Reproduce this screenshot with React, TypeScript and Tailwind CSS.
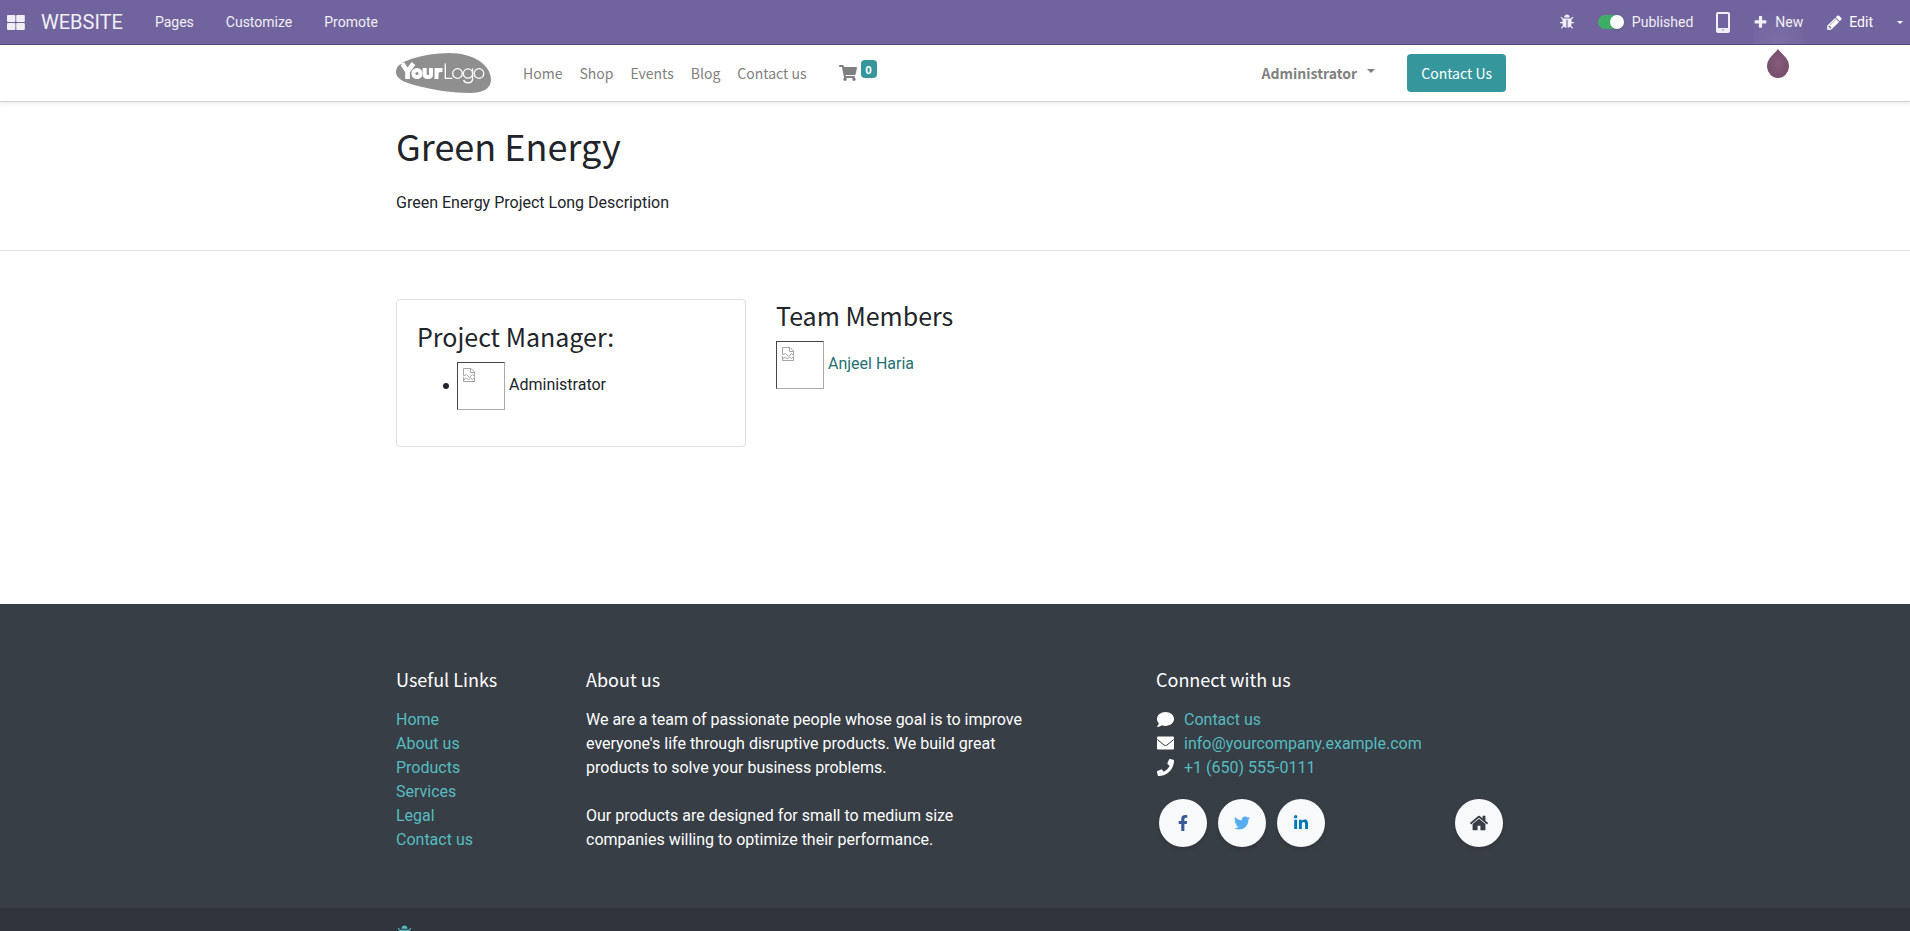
import React from "react";
import { FaShoppingCart, FaComment, FaPhone, FaFacebookF, FaTwitter, FaLinkedinIn } from "react-icons/fa";

const HEAD = "font-['Noto_Sans_CJK_SC','Open_Sans',sans-serif]";

const BUG =
  "M1696 960q0 26-19 45t-45 19h-224q0 171-67 290l208 209q19 19 19 45t-19 45q-18 19-45 19t-45-19l-198-197q-5 5-15 13t-42 28.5-65 36.5-82 29-97 13v-896h-128v896q-51 0-101.500-13.500t-87-33-66-39-43.500-32.500l-15-14-183 207q-20 21-48 21-24 0-43-16-19-18-20.500-44.500t15.500-46.500l202-227q-58-114-58-274h-224q-26 0-45-19t-19-45 19-45 45-19h224v-294l-173-173q-19-19-19-45t19-45 45-19 45 19l173 173h844l173-173q19-19 45-19t45 19 19 45-19 45l-173 173v294h224q26 0 45 19t19 45zm-480-576h-640q0-133 93.500-226.500t226.500-93.500 226.500 93.500 93.500 226.500z";
const PENCIL =
  "M491 1536l91-91-235-235-91 91v107h128v128h107zm523-928q0-22-22-22-10 0-17 7l-542 542q-7 7-7 17 0 22 22 22 10 0 17-7l542-542q7-7 7-17zm-54-192l416 416-832 832h-416v-416zm683 96q0 53-37 90l-166 166-416-416 166-165q36-38 90-38 53 0 91 38l235 234q37 39 37 91z";
const PLUS =
  "M1600 736v192q0 40-28 68t-68 28h-416v416q0 40-28 68t-68 28h-192q-40 0-68-28t-28-68v-416h-416q-40 0-68-28t-28-68v-192q0-40 28-68t68-28h416v-416q0-40 28-68t68-28h192q40 0 68 28t28 68v416h416q40 0 68 28t28 68z";
const HOME =
  "M1472 992v480q0 26-19 45t-45 19h-384v-384h-256v384h-384q-26 0-45-19t-19-45v-480q0-1 .5-3t.5-3l575-474 575 474q1 2 1 6zm223-69l-62 74q-8 9-21 11h-3q-13 0-21-7l-692-577-692 577q-12 8-24 7-13-2-21-11l-62-74q-8-10-7-23.500t11-21.500l719-599q32-26 76-26t76 26l244 204v-195q0-14 9-23t23-9h192q14 0 23 9t9 23v408l219 182q10 8 11 21.500t-7 23.500z";

function Glyph({ d, className }: { d: string; className: string }) {
  return (
    <svg viewBox="0 0 1792 1792" className={className} fill="currentColor" aria-hidden="true">
      <path d={d} />
    </svg>
  );
}

function AppsIcon() {
  return (
    <svg viewBox="0 0 18 15" className="h-[15px] w-[18px]" fill="currentColor" aria-hidden="true">
      <rect x="0" y="0" width="8.4" height="7" rx="1" />
      <rect x="9.2" y="0" width="8.6" height="7" rx="1" />
      <rect x="0" y="8" width="8.4" height="7" rx="1" />
      <rect x="9.2" y="8" width="8.6" height="7" rx="1" />
    </svg>
  );
}

function MobileIcon() {
  return (
    <svg viewBox="0 0 14 21" className="h-[21px] w-[14px]" aria-hidden="true">
      <path fillRule="evenodd" fill="currentColor" d="M2 0h10a2 2 0 0 1 2 2v17a2 2 0 0 1-2 2H2a2 2 0 0 1-2-2V2a2 2 0 0 1 2-2zM2 2v14h10V2zM6 17.500h2l-1 1.500z" />
    </svg>
  );
}

function EnvelopeIcon() {
  return (
    <svg viewBox="0 0 17 14" className="mb-[2px] ml-px h-[14px] w-[17px]" aria-hidden="true">
      <rect width="17" height="13" y=".5" rx="1" fill="currentColor" />
      <path d="M.3 3.500L7 9Q8.500 10.200 10 9L16.700 3.500" fill="none" stroke="#383e45" strokeWidth="1" />
    </svg>
  );
}

function Logo() {
  return (
    <svg viewBox="0 0 95 40" className="h-10 w-[95px]" role="img" aria-label="Your Logo">
      <path d="M0 19C0 12 7 9 15 6C27 2 40 0 53 0C76 0 95 11 95 27C95 36 86 40 74 40C58 40 36 37 18 32C7 29 0 25 0 19Z" fill="#8f8f8f" />
      <g fill="none" stroke="#fff" strokeLinecap="butt">
        <path d="M4 10.500H9" strokeWidth="1.500" />
        <path d="M6.500 11L11.500 18.500L17.500 10.500M11.500 17V26" strokeWidth="4.600" />
        <circle cx="21" cy="20.500" r="3.600" strokeWidth="4" />
        <path d="M28.700 15V21.500Q28.700 24 31.800 24Q35 24 35 21.500V15" strokeWidth="4" />
        <path d="M40.500 26V15M40.500 20Q41 16.700 46.500 17" strokeWidth="4" />
        <path d="M49.300 10.500V25.300H56.500" strokeWidth="1.300" />
        <circle cx="61.500" cy="20.500" r="4.800" strokeWidth="1.300" />
        <circle cx="72" cy="20.500" r="4.600" strokeWidth="1.300" />
        <path d="M76.600 15.500V25.500Q76.600 29.800 72 29.800Q68.500 29.800 67.600 27" strokeWidth="1.300" />
        <circle cx="83" cy="20.500" r="4.800" strokeWidth="1.300" />
      </g>
    </svg>
  );
}

function BrokenImage() {
  return (
    <span className="inline-block h-12 w-12 shrink-0 border border-t-[#464646] border-l-[#464646] border-r-[#ababab] border-b-[#ababab] p-[5px]">
      <svg viewBox="0 0 12 14" className="h-[14px] w-3" fill="none" stroke="#a5a5a5" aria-hidden="true">
        <path d="M.5 7.500V.5H8L11.500 4V8.500L9.500 6.500L6.500 9.500L3.500 6.500L.5 8M7.500 .5V4.500H11.500" />
        <path d="M.5 9.500V13.500H11.500V9.500L9.500 11.500L7.500 10L5.500 12L3.500 10L1.500 11.500Z" />
      </svg>
    </span>
  );
}

const menu = ["Home", "Shop", "Events", "Blog", "Contact us"];
const links = ["Home", "About us", "Products", "Services", "Legal", "Contact us"];
const round = "flex size-12 items-center justify-center rounded-full bg-[#f8f9fa] shadow-[0_2px_4px_rgba(0,0,0,0.15)]";

export default function App() {
  return (
    <div className="flex h-screen flex-col overflow-hidden bg-white font-[Roboto,sans-serif] text-base leading-6 text-[#212529]">
      <header className="flex h-[45px] shrink-0 items-center border-b border-[#5a4c80] bg-[#71639e] text-sm text-white/90">
        <a href="#apps" aria-label="Applications" className="pl-[7px]"><AppsIcon /></a>
        <a href="#website" className="ml-4 text-xl">WEBSITE</a>
        <nav className="ml-8 flex gap-8">
          <a href="#pages">Pages</a>
          <a href="#customize">Customize</a>
          <a href="#promote">Promote</a>
        </nav>
        <div className="ml-auto flex h-full items-center">
          <a href="#debug" aria-label="Debug" className="mr-[23px]"><Glyph d={BUG} className="size-4" /></a>
          <label className="mr-[23px] flex items-center gap-2">
            <span className="relative flex h-[14px] w-[26px] items-center rounded-full bg-[#40ad67]">
              <input type="checkbox" defaultChecked className="absolute inset-0 appearance-none" />
              <span className="ml-auto size-[14px] rounded-full bg-white shadow" />
            </span>
            Published
          </label>
          <button type="button" aria-label="Mobile preview" className="mr-[23px]"><MobileIcon /></button>
          <div className="relative flex h-full items-center bg-[radial-gradient(circle_at_50%_100%,rgba(255,255,255,0.08),transparent_70%)]">
            <button type="button" className="flex items-center gap-[7px]"><Glyph d={PLUS} className="size-[15px]" />New</button>
            <svg viewBox="0 0 22 30" className="absolute top-[49px] left-[14px] h-[30px] w-[22px]" aria-hidden="true">
              <defs>
                <radialGradient id="drop"><stop offset="0" stopColor="#875a7b" /><stop offset="1" stopColor="#774f6c" /></radialGradient>
              </defs>
              <path d="M11 0C13 3 17 6 19.500 9.500A11 12 0 1 1 2.500 9.500C5 6 9 3 11 0Z" fill="url(#drop)" />
            </svg>
          </div>
          <button type="button" className="ml-[23px] flex items-center gap-[6px] text-white"><Glyph d={PENCIL} className="size-[17px]" />Edit</button>
          <button type="button" aria-label="More" className="mr-[7px] ml-6 border-x-[3px] border-t-[3px] border-x-transparent border-t-white" />
        </div>
      </header>

      <div className="shrink-0 border-b border-[#d3d3d3] pr-2 shadow-[0_2px_4px_rgba(0,0,0,0.075)]">
        <div className={`mx-auto flex h-14 max-w-[1140px] items-center px-[15px] text-[14px] text-[#808080] ${HEAD}`}>
          <a href="#home"><Logo /></a>
          <nav className="ml-8 flex items-center gap-[17px]">
            {menu.map((m) => <a key={m} href="#menu">{m}</a>)}
          </nav>
          <a href="#cart" aria-label="Cart" className="ml-8 flex items-center gap-1">
            <FaShoppingCart className="size-[18px]" />
            <span className="mb-2 flex h-[18px] w-4 items-center justify-center rounded bg-[#35979c] text-[11px] font-bold text-white">0</span>
          </a>
          <button type="button" className="ml-auto flex items-center gap-[10px] font-bold">Administrator
            <span className="mb-1 border-x-4 border-t-4 border-x-transparent border-t-current" />
          </button>
          <a href="#contact" className="ml-8 rounded bg-[#35979c] px-[14px] py-[7px] text-white">Contact Us</a>
        </div>
      </div>

      <section className="shrink-0 border-b border-[#dee2e6] pr-2">
        <div className="mx-auto max-w-[1140px] px-[15px] pt-5 pb-[35px]">
          <h1 className={`text-[36px] leading-[46px] ${HEAD}`}>Green Energy</h1>
          <p className="mt-[23px]">Green Energy Project Long Description</p>
        </div>
      </section>

      <main className="grow pr-2">
        <div className="mx-auto flex max-w-[1140px] items-start pt-12">
          <div className="w-1/3 px-[15px]">
            <div className="rounded border border-[#dfdfdf] px-5 pt-5 pb-9">
              <h2 className={`text-[25px] leading-8 ${HEAD}`}>Project Manager:</h2>
              <ul className="mt-[10px] pl-[26px]">
                <li className="flex items-center">
                  <span className="mr-2 size-[6px] rounded-full bg-current" />
                  <BrokenImage />
                  <span className="mb-[2px] ml-1">Administrator</span>
                </li>
              </ul>
            </div>
          </div>
          <div className="w-2/3 px-[15px]">
            <h2 className={`text-[25px] leading-8 ${HEAD}`}>Team Members</h2>
            <a href="#member" className="mt-[10px] flex items-center text-[#23716f]">
              <BrokenImage />
              <span className="mb-[2px] ml-1">Anjeel Haria</span>
            </a>
          </div>
        </div>
      </main>

      <footer className="shrink-0 bg-[#383e45] text-white">
        <div className="pr-2">
          <div className="mx-auto flex h-[304px] max-w-[1140px] pt-16">
            <div className="w-1/6 px-[15px]">
              <h5 className={`mb-[18px] text-[18px] leading-[22px] ${HEAD}`}>Useful Links</h5>
              <ul className="text-[#55bcc1]">
                {links.map((l) => <li key={l}><a href="#link">{l}</a></li>)}
              </ul>
            </div>
            <div className="w-5/12 px-[15px]">
              <h5 className={`mb-[18px] text-[18px] leading-[22px] ${HEAD}`}>About us</h5>
              <p>We are a team of passionate people whose goal is to improve everyone's life through disruptive products. We build great products to solve your business problems.</p>
              <p className="mt-6 pr-10">Our products are designed for small to medium size companies willing to optimize their performance.</p>
            </div>
            <div className="ml-auto w-1/3 px-[15px]">
              <h5 className={`mb-[18px] text-[18px] leading-[22px] ${HEAD}`}>Connect with us</h5>
              <ul>
                <li className="flex items-center gap-[10px]"><FaComment className="mb-[2px] ml-px size-[17px]" /><a className="text-[#55bcc1]" href="#contact">Contact us</a></li>
                <li className="flex items-center gap-[10px]"><EnvelopeIcon /><a className="text-[#55bcc1]" href="#mail">info@yourcompany.example.com</a></li>
                <li className="flex items-center gap-[10px]"><FaPhone className="mb-[2px] ml-px size-[17px]" /><a className="text-[#55bcc1]" href="#phone">+1 (650) 555-0111</a></li>
              </ul>
              <div className="mt-[19px] flex gap-[11px] px-[3px]">
                <a href="#facebook" aria-label="Facebook" className={`${round} text-[#3b5998]`}><FaFacebookF className="size-4" /></a>
                <a href="#twitter" aria-label="Twitter" className={`${round} text-[#55acee]`}><FaTwitter className="size-4" /></a>
                <a href="#linkedin" aria-label="LinkedIn" className={`${round} text-[#0077b5]`}><FaLinkedinIn className="size-4" /></a>
                <a href="#home" aria-label="Home" className={`${round} ml-auto text-[#383e45]`}><Glyph d={HOME} className="size-5" /></a>
              </div>
            </div>
          </div>
        </div>
        <div className="h-[23px] overflow-hidden bg-[#30343c] pr-2">
          <div className="mx-auto max-w-[1140px] px-[15px] pt-[17px]">
            <Glyph d={BUG} className="size-[17px] text-[#55bcc1]" />
          </div>
        </div>
      </footer>
    </div>
  );
}
